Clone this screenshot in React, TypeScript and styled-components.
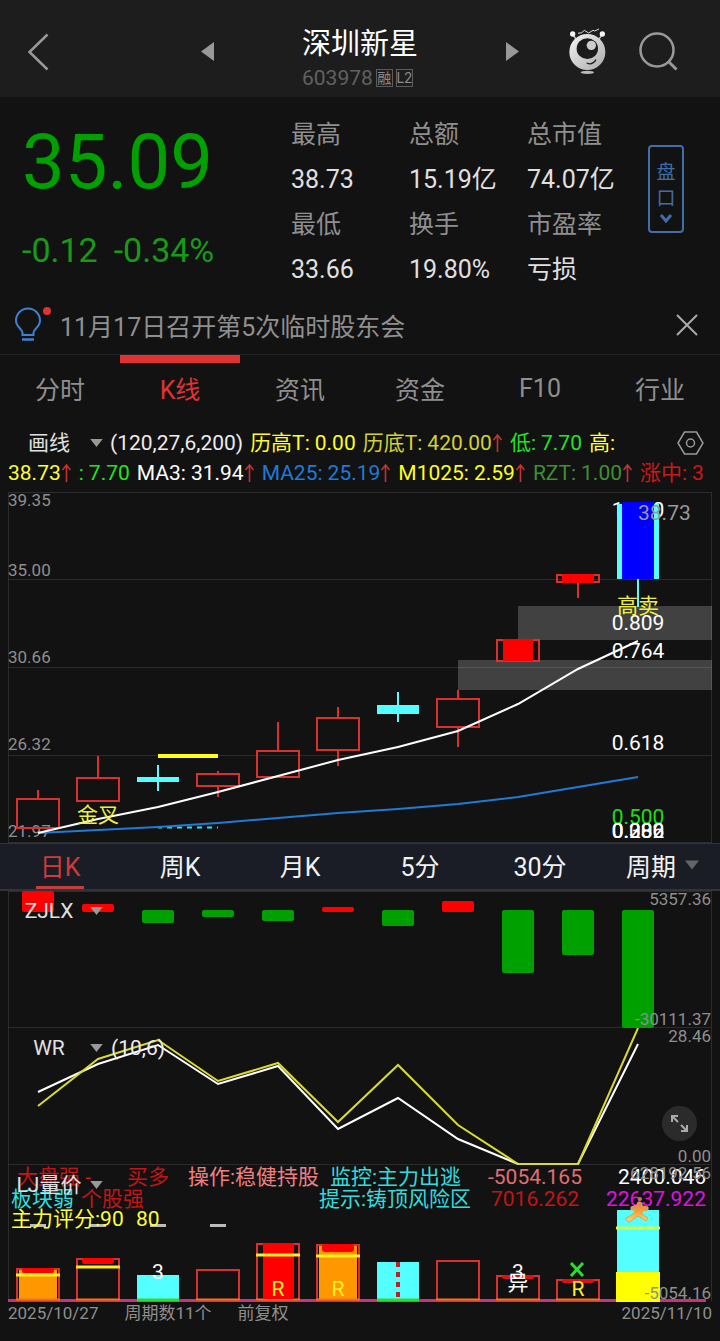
import React from "react";
import styled, { createGlobalStyle } from "styled-components";

const FONT = `Roboto, "Noto Sans CJK SC", sans-serif`;
const C = {
  bg: "#121212",
  header: "#1d1d1d",
  grid: "#2c2c2c",
  muted: "#8f8f8f",
  text: "#e0e0e0",
  accent: "#e03232",
  green: "#00a000",
  cyan: "#54ffff",
  yellow: "#ffff33",
  blue: "#1f7ad8",
};

const GlobalStyle = createGlobalStyle`
  * { box-sizing: border-box; }
  html { background: ${C.bg}; }
  body { margin: 0; background: ${C.bg}; color: ${C.text}; font-family: ${FONT}; }
  button { appearance: none; margin: 0; padding: 0; border: 0; background: none; color: inherit; font: inherit; cursor: pointer; }
  svg { display: block; }
  svg text { font-family: ${FONT}; }
`;

/* ---------- Header ---------- */

const Header = styled.header`
  display: grid;
  grid-template-columns: 1fr 318px 1fr;
  align-items: center;
  padding-top: 6px;
  height: 97px;
  background: ${C.header};
`;
const HeaderSide = styled.div<{ $end?: boolean }>`
  display: flex;
  align-items: center;
  justify-content: ${(p) => (p.$end ? "flex-end" : "flex-start")};
  gap: 32px;
  padding: ${(p) => (p.$end ? "0 42px 0 0" : "0 0 0 27px")};
`;
const StockNav = styled.div`
  display: flex;
  align-items: center;
  justify-content: space-between;
`;
const StockTitle = styled.div`
  display: flex;
  flex-direction: column;
  gap: 4px;
  padding-top: 11px;
`;
const StockName = styled.h1`
  margin: 0;
  font-size: 29px;
  line-height: 38px;
  font-weight: 400;
  color: #fff;
`;
const StockCode = styled.div`
  display: flex;
  align-items: center;
  gap: 3px;
  font-size: 21px;
  line-height: 22px;
  color: #616161;
`;
const Badge = styled.span`
  width: 17px;
  height: 18px;
  border: 1px solid #5c5c5c;
  font-size: 14px;
  line-height: 16px;
  display: flex;
  justify-content: center;
  color: #8c8c8c;
`;

/* ---------- Quote ---------- */

const Quote = styled.section`
  display: grid;
  grid-template-columns: 269fr 354fr 39px;
  padding: 15px 36px 0 22px;
  height: 201px;
`;
const PriceBlock = styled.div`
  color: ${C.green};
`;
const Price = styled.div`
  font-size: 76px;
  line-height: 100px;
`;
const Change = styled.div`
  display: flex;
  gap: 16px;
  margin-top: 18px;
  font-size: 34px;
  line-height: 40px;
  color: #179b17;
`;
const Stats = styled.dl`
  display: grid;
  grid-template-columns: repeat(3, 1fr);
  align-content: start;
  margin: 0;
  font-size: 25px;
  line-height: 45px;
  white-space: nowrap;
`;
const StatLabel = styled.dt`
  color: ${C.muted};
`;
const StatValue = styled.dd`
  margin: 0;
`;
const DepthButton = styled.button`
  && {
    justify-self: end;
    display: flex;
    flex-direction: column;
    align-items: center;
    width: 36px;
    height: 88px;
    margin-top: 33px;
    padding-top: 13px;
    border: 2px solid #3f6ea8;
    border-radius: 4px;
    font-size: 19px;
    line-height: 26px;
    color: #3f6ea8;
  }
`;
const DepthChevron = styled.svg`
  margin-top: 2px;
`;

/* ---------- Notice ---------- */

const Notice = styled.section`
  display: flex;
  align-items: center;
  height: 57px;
  padding: 0 22px 2px 14px;
  border-bottom: 1px solid #222;
  font-size: 25px;
  color: ${C.muted};
`;
const NoticeText = styled.a`
  flex: 1;
  margin-left: 6px;
  color: inherit;
  text-decoration: none;
`;

/* ---------- Tabs ---------- */

const Tabs = styled.nav`
  display: grid;
  grid-template-columns: repeat(6, 1fr);
`;
const Tab = styled.button<{ $active?: boolean }>`
  && {
    height: 68px;
    border-top: 8px solid ${(p) => (p.$active ? C.accent : "transparent")};
    padding-bottom: 10px;
    font-size: 25px;
    color: ${(p) => (p.$active ? C.accent : C.muted)};
  }
`;
const PeriodBar = styled.nav`
  display: grid;
  grid-template-columns: repeat(6, 1fr);
  border-top: 1px solid #333;
  border-bottom: 2px solid #333338;
  background: #1a1d25;
`;
const Period = styled.button<{ $active?: boolean; $menu?: boolean }>`
  && {
    display: flex;
    align-items: center;
    justify-content: center;
    gap: 9px;
    height: 45px;
    padding: 0 0 3px ${(p) => (p.$menu ? "5px" : "0")};
    font-size: 25px;
    color: ${(p) => (p.$active ? "#d23a3a" : "#f2f2f2")};
    background: ${(p) =>
      p.$active ? "linear-gradient(#c43c3c, #c43c3c) center bottom / 48px 3px no-repeat" : "none"};
  }
`;

/* ---------- Indicator read-outs ---------- */

const Readout = styled.section`
  padding: 5px 0 4px;
  font-size: 21px;
  line-height: 30px;
  white-space: nowrap;
  overflow: hidden;
`;
const ReadoutRow = styled.div<{ $indent?: boolean }>`
  display: flex;
  align-items: center;
  gap: 7px;
  padding-left: ${(p) => (p.$indent ? "8px" : "0")};
  height: 30px;
`;
const Reading = styled.span<{ $color: string }>`
  display: flex;
  align-items: center;
  gap: 5px;
  color: ${(p) => p.$color};
`;
const ReadingValue = styled.span`
  display: flex;
  align-items: center;
`;
const SettingsButton = styled.button`
  && {
    margin: 0 16px 0 auto;
  }
`;
const Picker = styled.button`
  && {
    display: grid;
    grid-template-columns: 82px 13px;
    align-items: center;
    margin-left: 8px;
    font-size: 21px;
    line-height: 30px;
    color: ${C.text};
  }
`;
const PickerParams = styled.span`
  color: #ececec;
  font-size: 21px;
`;

/* ---------- Chart panels ---------- */

const Panel = styled.section`
  position: relative;
`;
const Chart = styled.svg`
  width: 100%;
  height: auto;
`;
const PanelHead = styled.div`
  position: absolute;
  top: 0;
  left: 0;
  display: flex;
  align-items: center;
  gap: 8px;
  height: 40px;
`;
const ExpandButton = styled.button`
  && {
    position: absolute;
    right: 23px;
    bottom: 24px;
    width: 35px;
    height: 35px;
    border-radius: 50%;
    background: #2b2b2b;
  }
`;
const Footer = styled.footer`
  display: flex;
  gap: 26px;
  padding: 0 8px 16px;
  font-size: 17px;
  line-height: 23px;
  color: ${C.muted};
`;
const FooterEnd = styled.span`
  margin-left: auto;
`;

/* ---------- Icons ---------- */

const Caret = ({ color = "#999", size = 13 }: { color?: string; size?: number }) => (
  <svg width={size} height={size === 13 ? 8 : 10} viewBox="0 0 14 9">
    <path d="M0 0H14L7 9Z" fill={color} />
  </svg>
);
const Triangle = ({ flip }: { flip?: boolean }) => (
  <svg width="13" height="19" viewBox="0 0 13 19">
    <path d={flip ? "M0 0L13 9.500L0 19Z" : "M13 0L0 9.500L13 19Z"} fill="#999" />
  </svg>
);
const UpArrow = () => (
  <svg width="11" height="20" viewBox="0 0 11 20" fill="none" stroke="#c83030" strokeWidth="1.6">
    <path d="M5.500 19V2M1.500 7L5.500 2L9.500 7" />
  </svg>
);
const Mascot = () => (
  <svg width="40" height="47" viewBox="51 39 120 141">
    <defs>
      <linearGradient id="mascot" x1="0" y1="0" x2="1" y2="1">
        <stop offset="0" stopColor="#f4f4f4" />
        <stop offset="1" stopColor="#aaa" />
      </linearGradient>
    </defs>
    <path d="M68 58L80 75M157 58L145 75" stroke="#ccc" strokeWidth="4" />
    <circle cx="68" cy="57" r="8" fill="#f4f4f4" />
    <circle cx="157" cy="57" r="8" fill="#f4f4f4" />
    <path d="M84 55L95 53L103 46L116 54L129 46L134 48L147 42" fill="none" stroke="#ddd" strokeWidth="3" />
    <circle cx="112" cy="111" r="54" fill="url(#mascot)" />
    <ellipse cx="112" cy="101" rx="32" ry="31" fill="#1b1b1b" />
    <circle cx="124" cy="91" r="14" fill="#ccc" />
    <path d="M110 144Q127 152 138 134" fill="none" stroke="#1b1b1b" strokeWidth="4" />
    <ellipse cx="112" cy="172" rx="20" ry="5" fill="#bbb" />
  </svg>
);

/* ---------- Data ---------- */

const stats = [
  ["最高", "38.73"], ["总额", "15.19亿"], ["总市值", "74.07亿"],
  ["最低", "33.66"], ["换手", "19.80%"], ["市盈率", "亏损"],
];
const centers = Array.from({ length: 11 }, (_, i) => 38 + i * 60);

type Candle = { top: number; bottom: number; high?: number; low?: number; down?: boolean };
const candles: Candle[] = [
  { top: 306, bottom: 337, high: 298 },
  { top: 285, bottom: 310, high: 264 },
  { top: 285, bottom: 290, high: 273, low: 299, down: true },
  { top: 281, bottom: 295, high: 279, low: 305 },
  { top: 258, bottom: 286, high: 230 },
  { top: 225, bottom: 259, high: 215, low: 274 },
  { top: 213, bottom: 222, high: 200, low: 230, down: true },
  { top: 206, bottom: 236, high: 198, low: 255 },
  { top: 147, bottom: 170 },
  { top: 82, bottom: 91, low: 106 },
  { top: 12, bottom: 87, low: 115, down: true },
];
const flows = [
  [0, 21, 1], [13, 21, 1], [19, 32, 0], [19, 26, 0], [19, 30, 0], [16, 21, 1],
  [19, 35, 0], [10, 21, 1], [19, 82, 0], [19, 64, 0], [19, 137, 0],
];
const plot = (ys: number[]) => ys.map((y, i) => `${centers[i]},${y}`).join(" ");

const Outline = ({ x, top, bottom }: { x: number; top: number; bottom: number }) => (
  <rect x={x - 21} y={top + 1} width="42" height={bottom - top - 2} fill="none" stroke="#dc3030" strokeWidth="2" />
);
const Frame = ({ bottom }: { bottom: number }) => (
  <path d={`M8.500 0V${bottom}M711.500 0V${bottom}`} stroke={C.grid} strokeWidth="1" />
);
const AxisText = ({ y, end, children }: { y: number; end?: boolean; children: string }) => (
  <text x={end ? 711 : 8} y={y} textAnchor={end ? "end" : "start"} fontSize="17" fill={C.muted}>
    {children}
  </text>
);
const Mark = ({ x, y, fill, middle, children }: { x: number; y: number; fill: string; middle?: boolean; children: string }) => (
  <text x={x} y={y} textAnchor={middle ? "middle" : "start"} fontSize="21" fill={fill}>
    {children}
  </text>
);

const PriceChart = () => (
  <Chart viewBox="0 0 720 351" role="img" aria-label="K线图">
    <path d="M8 0.500H712M8 87.500H712M8 175.500H712M8 263.500H712M8 350.500H712" stroke={C.grid} />
    <Frame bottom={350} />
    <rect x="518" y="114" width="194" height="34" fill="#fff" fillOpacity="0.2" />
    <rect x="458" y="168" width="254" height="30" fill="#fff" fillOpacity="0.2" />
    <AxisText y={14}>39.35</AxisText>
    <AxisText y={84}>35.00</AxisText>
    <AxisText y={171}>30.66</AxisText>
    <AxisText y={258}>26.32</AxisText>
    <AxisText y={345}>21.97</AxisText>
    <Mark x={638} y={25} fill="#fff" middle>1.000</Mark>
    {candles.map((c, i) => (
      <g key={i}>
        {c.high !== undefined && (
          <path d={`M${centers[i]} ${c.high}V${c.top}`} stroke={c.down ? C.cyan : "#dc3030"} strokeWidth="2" />
        )}
        {c.low !== undefined && (
          <path d={`M${centers[i]} ${c.bottom}V${c.low}`} stroke={c.down ? C.cyan : "#dc3030"} strokeWidth="2" />
        )}
        {c.down ? (
          <rect x={centers[i] - 21} y={c.top} width="42" height={c.bottom - c.top} fill={C.cyan} />
        ) : (
          <Outline x={centers[i]} top={c.top} bottom={c.bottom} />
        )}
      </g>
    ))}
    <rect x="503" y="147" width="30" height="22" fill="#f00" />
    <rect x="562" y="82" width="32" height="9" fill="#f00" />
    <rect x="622" y="10" width="32" height="77" fill="#00f" />
    <path d="M158 264H218" stroke="#ffff1a" strokeWidth="4" />
    <path d="M158 335.500H218" stroke="#2adfe8" strokeWidth="2" strokeDasharray="5 5" strokeDashoffset="1" />
    <polyline points={plot([341, 338, 335, 331, 326, 321, 317, 312, 305, 295, 285])} fill="none" stroke={C.blue} strokeWidth="2" />
    <polyline points={plot([341, 327, 315, 300, 284, 268, 255, 239, 212, 177, 149])} fill="none" stroke="#fff" strokeWidth="2" />
    <Mark x={98} y={330} fill="#f0f03c" middle>金叉</Mark>
    <Mark x={638} y={121} fill="#f0f03c" middle>高卖</Mark>
    <Mark x={638} y={28} fill="#999">38.73</Mark>
    <Mark x={638} y={138} fill="#fff" middle>0.809</Mark>
    <Mark x={638} y={166} fill="#fff" middle>0.764</Mark>
    <Mark x={638} y={258} fill="#fff" middle>0.618</Mark>
    <Mark x={638} y={332} fill="#16e016" middle>0.500</Mark>
    <Mark x={638} y={346} fill="#fff" middle>0.382</Mark>
    <Mark x={638} y={346} fill="#fff" middle>0.236</Mark>
    <Mark x={638} y={346} fill="#fff" middle>0.000</Mark>
  </Chart>
);

const FlowChart = () => (
  <Chart viewBox="0 0 720 137" role="img" aria-label="资金流向">
    <path d="M8 0.500H712M8 136.500H712" stroke={C.grid} />
    <Frame bottom={137} />
    {flows.map(([top, bottom, up], i) => (
      <rect key={i} x={centers[i] - 16} y={top} width="32" height={bottom - top} rx="2" fill={up ? "#f00" : C.green} />
    ))}
    <AxisText y={14} end>5357.36</AxisText>
    <AxisText y={134} end>-30111.37</AxisText>
  </Chart>
);

const WrChart = () => (
  <Chart viewBox="0 0 720 137" role="img" aria-label="威廉指标">
    <path d="M8 136.500H712" stroke={C.grid} />
    <Frame bottom={137} />
    <polyline points={plot([64, 36, 17, 56, 38, 101, 70, 111, 136, 136, 16])} fill="none" stroke="#fff" strokeWidth="2" />
    <polyline points={plot([78, 31, 12, 53, 35, 94, 37, 97, 136, 136, 0])} fill="none" stroke="#dada30" strokeWidth="2" />
    <AxisText y={14} end>28.46</AxisText>
    <AxisText y={134} end>0.00</AxisText>
  </Chart>
);

const bases = [38, 98, 218, 278, 338, 458, 518, 578];

const VolumeChart = () => (
  <Chart viewBox="0 0 720 137" role="img" aria-label="量价">
    <defs>
      <linearGradient id="runner" x1="0" y1="0" x2="0" y2="1">
        <stop offset="0" stopColor="#e07a50" />
        <stop offset="0.5" stopColor="#f7a23a" />
        <stop offset="1" stopColor="#f4dc80" />
      </linearGradient>
    </defs>
    <Frame bottom={136} />
    <path d="M8 135.500H706" stroke="#c8327d" strokeWidth="3" />
    <rect x="19" y="104" width="38" height="31" fill="#ff9800" />
    <rect x="319" y="79" width="38" height="56" fill="#ff9800" />
    <Outline x={38} top={103} bottom={136} />
    <Outline x={98} top={93} bottom={136} />
    <Outline x={218} top={104} bottom={136} />
    <Outline x={278} top={78} bottom={136} />
    <Outline x={338} top={79} bottom={136} />
    <Outline x={458} top={95} bottom={136} />
    <Outline x={518} top={110} bottom={136} />
    <Outline x={578} top={114} bottom={136} />
    {bases.map((x) => (
      <path key={x} d={`M${x - 22} 134.500H${x + 22}`} stroke="#f07320" strokeWidth="2" />
    ))}
    <rect x="263" y="78" width="31" height="56" fill="#f00" />
    <rect x="22" y="103" width="32" height="5" rx="2" fill="#f00" />
    <rect x="82" y="93" width="32" height="6" rx="2" fill="#f00" />
    <rect x="322" y="79" width="32" height="8" rx="3" fill="#f00" />
    <rect x="502" y="110" width="32" height="4" rx="2" fill="#e01010" />
    <rect x="562" y="114" width="32" height="4" rx="2" fill="#e01010" />
    <rect x="137" y="110" width="42" height="24" fill={C.cyan} />
    <rect x="377" y="97" width="42" height="37" fill={C.cyan} />
    <path d="M137 135H179M377 135H419" stroke="#2edc2e" strokeWidth="3" />
    <path d="M398 97V133" stroke="#c02020" strokeWidth="4" strokeDasharray="5 5" />
    <rect x="617" y="45" width="42" height="62" fill={C.cyan} />
    <rect x="616" y="107" width="44" height="30" fill="#ff0" />
    <path d="M616 63H660" stroke="#c8ff50" strokeWidth="3" />
    <path d="M16 110H60M76 102H120M256 90H300M316 91H360" stroke="#ffee20" strokeWidth="3" />
    <path d="M30 60.500H46M90 60.500H106M150 60.500H166M210 60.500H226" stroke="#bbb" strokeWidth="3" />
    <Mark x={17} y={19} fill="#c41414">大盘强 -</Mark>
    <Mark x={127} y={19} fill="#c41414">买多</Mark>
    <Mark x={188} y={19} fill="#f08080">操作:稳健持股</Mark>
    <Mark x={330} y={19} fill="#2edede">监控:主力出逃</Mark>
    <Mark x={488} y={19} fill="#e07070">-5054.165</Mark>
    <Mark x={618} y={19} fill="#fff">2400.046</Mark>
    <AxisText y={14} end>628192.56</AxisText>
    <Mark x={11} y={41} fill="#2edede">板块弱</Mark>
    <Mark x={81} y={41} fill="#c41414">个股强</Mark>
    <Mark x={319} y={41} fill="#2edede">提示:铸顶风险区</Mark>
    <Mark x={491} y={41} fill="#c41414">7016.262</Mark>
    <Mark x={606} y={41} fill="#e010e0">22637.922</Mark>
    <Mark x={11} y={61} fill={C.yellow}>主力评分:90</Mark>
    <Mark x={136} y={61} fill={C.yellow}>80</Mark>
    <circle cx="640" cy="34" r="2" fill="#c8705a" />
    <path
      d="M638 37L642 38L642 41L648 42L648 45L642 46L642 49L648 53L646 56L638 51L629 57L625 54L634 48L635 45L631 45L631 42L637 40Z"
      fill="url(#runner)"
      stroke="#d8a850"
      strokeWidth="1"
      strokeLinejoin="round"
    />
    <Mark x={158} y={114} fill="#fff" middle>3</Mark>
    <Mark x={278} y={131} fill="#ffee20" middle>R</Mark>
    <Mark x={338} y={131} fill="#ffee20" middle>R</Mark>
    <Mark x={518} y={114} fill="#fff" middle>3</Mark>
    <Mark x={518} y={125} fill="#fff" middle>异</Mark>
    <Mark x={578} y={131} fill="#ffee20" middle>R</Mark>
    <path d="M571 98L583 111M583 98L571 111" stroke="#2edc2e" strokeWidth="3" />
    <AxisText y={134} end>-5054.16</AxisText>
  </Chart>
);

const Item = ({ color, label, value, up }: { color: string; label?: string; value?: string; up?: boolean }) => (
  <Reading $color={color}>
    {label && <span>{label}</span>}
    {value && (
      <ReadingValue>
        {value}
        {up && <UpArrow />}
      </ReadingValue>
    )}
  </Reading>
);

const IndicatorPicker = ({ name }: { name: string }) => (
  <Picker type="button">
    <span>{name}</span>
    <Caret />
  </Picker>
);

export default function App() {
  return (
    <>
      <GlobalStyle />
      <Header>
        <HeaderSide>
          <button type="button" aria-label="返回">
            <svg width="22" height="40" viewBox="0 0 22 40" fill="none" stroke="#999" strokeWidth="2.500">
              <path d="M20.500 2.500L2.500 20L20.500 37.500" />
            </svg>
          </button>
        </HeaderSide>
        <StockNav>
          <button type="button" aria-label="上一只"><Triangle /></button>
          <StockTitle>
            <StockName>深圳新星</StockName>
            <StockCode>
              603978
              <Badge>融</Badge>
              <Badge>L2</Badge>
            </StockCode>
          </StockTitle>
          <button type="button" aria-label="下一只"><Triangle flip /></button>
        </StockNav>
        <HeaderSide $end>
          <button type="button" aria-label="智能助手"><Mascot /></button>
          <button type="button" aria-label="搜索">
            <svg width="39" height="39" viewBox="0 0 39 39" fill="none" stroke="#999" strokeWidth="2.500">
              <circle cx="18" cy="18" r="16.500" />
              <path d="M29 29L37.500 37.500" strokeWidth="3" />
            </svg>
          </button>
        </HeaderSide>
      </Header>

      <main>
        <Quote>
          <PriceBlock>
            <Price>35.09</Price>
            <Change>
              <span>-0.12</span>
              <span>-0.34%</span>
            </Change>
          </PriceBlock>
          <Stats>
            {[0, 3].map((start) => (
              <React.Fragment key={start}>
                {stats.slice(start, start + 3).map(([label]) => <StatLabel key={label}>{label}</StatLabel>)}
                {stats.slice(start, start + 3).map(([label, value]) => <StatValue key={label}>{value}</StatValue>)}
              </React.Fragment>
            ))}
          </Stats>
          <DepthButton type="button">
            <span>盘</span>
            <span>口</span>
            <DepthChevron width="14" height="10" viewBox="0 0 14 10" fill="none" stroke="#3f6ea8" strokeWidth="3">
              <path d="M2 1L7 7L12 1" />
            </DepthChevron>
          </DepthButton>
        </Quote>

        <Notice>
          <svg width="40" height="36" viewBox="0 0 40 36" fill="none" stroke="#3f80d0" strokeWidth="2">
            <path d="M8.500 28V25.500C8.500 22.500 2 20 2 13.500A12 12 0 0 1 26 13.500C26 20 19.500 22.500 19.500 25.500V28Z" />
            <path d="M8 32.500H20" strokeWidth="2.500" />
            <circle cx="33" cy="4" r="4" fill="#e03232" stroke="none" />
          </svg>
          <NoticeText href="#notice">11月17日召开第5次临时股东会</NoticeText>
          <button type="button" aria-label="关闭">
            <svg width="22" height="22" viewBox="0 0 22 22" fill="none" stroke="#aaa" strokeWidth="2">
              <path d="M1 1L21 21M21 1L1 21" />
            </svg>
          </button>
        </Notice>

        <Tabs>
          {["分时", "K线", "资讯", "资金", "F10", "行业"].map((name) => (
            <Tab key={name} type="button" $active={name === "K线"}>{name}</Tab>
          ))}
        </Tabs>

        <Readout>
          <ReadoutRow>
            <IndicatorPicker name="画线" />
            <PickerParams>(120,27,6,200)</PickerParams>
            <Item color="#ffff1a" label="历高T:" value="0.00" />
            <Item color="#d2d22d" label="历底T:" value="420.00" up />
            <Item color="#1ee61e" label="低:" value="7.70" />
            <Item color="#ffff33" label="高:" />
            <SettingsButton type="button" aria-label="指标设置">
              <svg width="27" height="24" viewBox="0 0 27 24" fill="none" stroke="#999" strokeWidth="1.500">
                <path d="M7.500 1H19.500L26 12L19.500 23H7.500L1 12Z" />
                <circle cx="13.500" cy="12" r="4" />
              </svg>
            </SettingsButton>
          </ReadoutRow>
          <ReadoutRow $indent>
            <Item color="#ffff33" value="38.73" up />
            <Item color="#1ee61e" label=":" value="7.70" />
            <Item color="#fff" label="MA3:" value="31.94" up />
            <Item color={C.blue} label="MA25:" value="25.19" up />
            <Item color="#ffff1a" label="M1025:" value="2.59" up />
            <Item color="#3f9030" label="RZT:" value="1.00" up />
            <Item color="#cc1818" label="涨中:" value="3" />
          </ReadoutRow>
        </Readout>

        <PriceChart />

        <PeriodBar>
          {["日K", "周K", "月K", "5分", "30分"].map((name) => (
            <Period key={name} type="button" $active={name === "日K"}>{name}</Period>
          ))}
          <Period type="button" $menu>周期<Caret color="#666" size={14} /></Period>
        </PeriodBar>

        <Panel>
          <FlowChart />
          <PanelHead><IndicatorPicker name="ZJLX" /></PanelHead>
        </Panel>
        <Panel>
          <WrChart />
          <PanelHead>
            <IndicatorPicker name="WR" />
            <PickerParams>(10,6)</PickerParams>
          </PanelHead>
          <ExpandButton type="button" aria-label="展开">
            <svg width="35" height="35" viewBox="0 0 35 35" fill="none" stroke="#aaa" strokeWidth="2">
              <path d="M10 16V10H16M10 10L16 16M19 25H25V19M25 25L19 19" />
            </svg>
          </ExpandButton>
        </Panel>
        <Panel>
          <VolumeChart />
          <PanelHead><IndicatorPicker name="LJ量价" /></PanelHead>
        </Panel>
      </main>

      <Footer>
        <span>2025/10/27</span>
        <span>周期数11个</span>
        <span>前复权</span>
        <FooterEnd>2025/11/10</FooterEnd>
      </Footer>
    </>
  );
}
